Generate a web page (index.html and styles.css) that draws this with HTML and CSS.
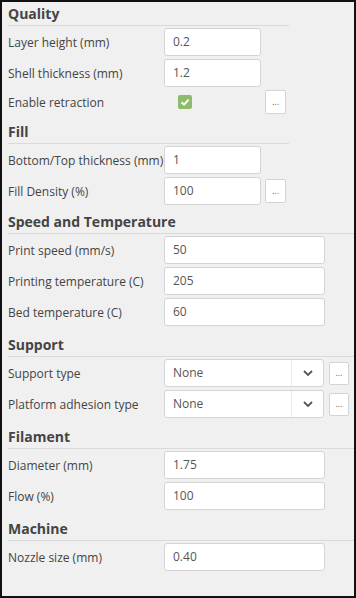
FILE: index.html
```html
<!DOCTYPE html>
<html>
<head>
<meta charset="utf-8">
<link rel="stylesheet" href="styles.css">
</head>
<body>
<div class="panel">
  <section class="sec sec-first sec-narrow">
    <h2 class="head">Quality</h2>
    <div class="rows">
      <div class="row"><span class="label">Layer height (mm)</span><div class="field short">0.2</div></div>
      <div class="row"><span class="label">Shell thickness (mm)</span><div class="field short">1.2</div></div>
      <div class="row row-check"><span class="label">Enable retraction</span>
        <div class="checkcell">
          <span class="check"><svg width="10" height="10" viewBox="0 0 10 10"><path d="M1.5 5.2 L4 7.6 L8.6 2.6" fill="none" stroke="#fff" stroke-width="2"/></svg></span>
        </div>
        <button class="more">...</button>
      </div>
    </div>
  </section>
  <section class="sec sec-fill sec-narrow">
    <h2 class="head">Fill</h2>
    <div class="rows">
      <div class="row"><span class="label">Bottom/Top thickness (mm)</span><div class="field short">1</div></div>
      <div class="row"><span class="label">Fill Density (%)</span><div class="field short">100</div><button class="more">...</button></div>
    </div>
  </section>
  <section class="sec sec-speed">
    <h2 class="head">Speed and Temperature</h2>
    <div class="rows">
      <div class="row"><span class="label">Print speed (mm/s)</span><div class="field">50</div></div>
      <div class="row"><span class="label">Printing temperature (C)</span><div class="field">205</div></div>
      <div class="row"><span class="label">Bed temperature (C)</span><div class="field">60</div></div>
    </div>
  </section>
  <section class="sec">
    <h2 class="head">Support</h2>
    <div class="rows">
      <div class="row"><span class="label">Support type</span>
        <div class="select"><span class="sel-val">None</span><span class="sel-arrow"><svg width="10" height="6" viewBox="0 0 10 6"><path d="M1 1 L5 5 L9 1" fill="none" stroke="#555" stroke-width="1.8"/></svg></span></div>
        <button class="more more-sel">...</button></div>
      <div class="row"><span class="label">Platform adhesion type</span>
        <div class="select"><span class="sel-val">None</span><span class="sel-arrow"><svg width="10" height="6" viewBox="0 0 10 6"><path d="M1 1 L5 5 L9 1" fill="none" stroke="#555" stroke-width="1.8"/></svg></span></div>
        <button class="more more-sel">...</button></div>
    </div>
  </section>
  <section class="sec">
    <h2 class="head">Filament</h2>
    <div class="rows">
      <div class="row"><span class="label">Diameter (mm)</span><div class="field">1.75</div></div>
      <div class="row"><span class="label">Flow (%)</span><div class="field">100</div></div>
    </div>
  </section>
  <section class="sec">
    <h2 class="head">Machine</h2>
    <div class="rows">
      <div class="row"><span class="label">Nozzle size (mm)</span><div class="field">0.40</div></div>
    </div>
  </section>
</div>
</body>
</html>
```
FILE: styles.css
```css
* { box-sizing: border-box; }
html, body { margin: 0; padding: 0; }
body {
  width: 356px;
  height: 598px;
  font-family: "Open Sans", "Liberation Sans", sans-serif;
  color: #444;
  background: #f0f0f0;
}
.panel {
  width: 356px;
  height: 598px;
  border: 2px solid #111;
  background: #f0f0f0;
  padding-left: 6px;
  overflow: hidden;
}
.sec { display: flex; flex-direction: column; }
.sec-narrow { width: 281px; }
.head {
  margin: 0;
  height: 31px;
  display: flex;
  align-items: flex-end;
  padding-bottom: 3px;
  border-bottom: 1px solid #dadada;
  font-size: 14px;
  font-weight: 700;
  line-height: 16px;
  color: #444;
}
.sec-first .head { height: 24px; }
.sec-fill .head { height: 30px; }
.sec-speed .head { height: 29px; }
.rows {
  display: flex;
  flex-direction: column;
  gap: 3px;
  padding-top: 2px;
}
.row {
  display: flex;
  align-items: center;
  height: 28px;
}
.row-check { height: 24px; }
.label {
  width: 156px;
  flex: none;
  font-size: 12px;
  color: #444;
  white-space: nowrap;
}
.field {
  width: 161px;
  height: 28px;
  background: #fff;
  border: 1px solid #d4d4d4;
  border-radius: 3px;
  padding-left: 8px;
  font-size: 12px;
  line-height: 26px;
  color: #555;
}
.field.short { width: 97px; }
.checkcell {
  width: 97px;
  height: 24px;
  display: flex;
  align-items: center;
  padding-left: 14px;
}
.check {
  width: 14px;
  height: 14px;
  border-radius: 2px;
  background: #8dbb6b;
  display: flex;
  align-items: center;
  justify-content: center;
}
.more {
  margin-left: 4px;
  width: 21px;
  height: 24px;
  padding: 0;
  background: #fff;
  border: 1px solid #d4d4d4;
  border-radius: 2px;
  font-family: "Open Sans", sans-serif;
  font-size: 9px;
  line-height: 20px;
  color: #666;
}
.more-sel { margin-left: 5px; width: 20px; height: 23px; }
.select {
  width: 160px;
  height: 28px;
  background: #fff;
  border: 1px solid #d4d4d4;
  border-radius: 3px;
  display: flex;
  align-items: stretch;
}
.sel-val {
  flex: 1;
  padding-left: 8px;
  font-size: 12px;
  line-height: 26px;
  color: #555;
}
.sel-arrow {
  width: 32px;
  border-left: 1px solid #ececec;
  display: flex;
  align-items: center;
  justify-content: center;
}
.sel-arrow svg { display: block; }
```
